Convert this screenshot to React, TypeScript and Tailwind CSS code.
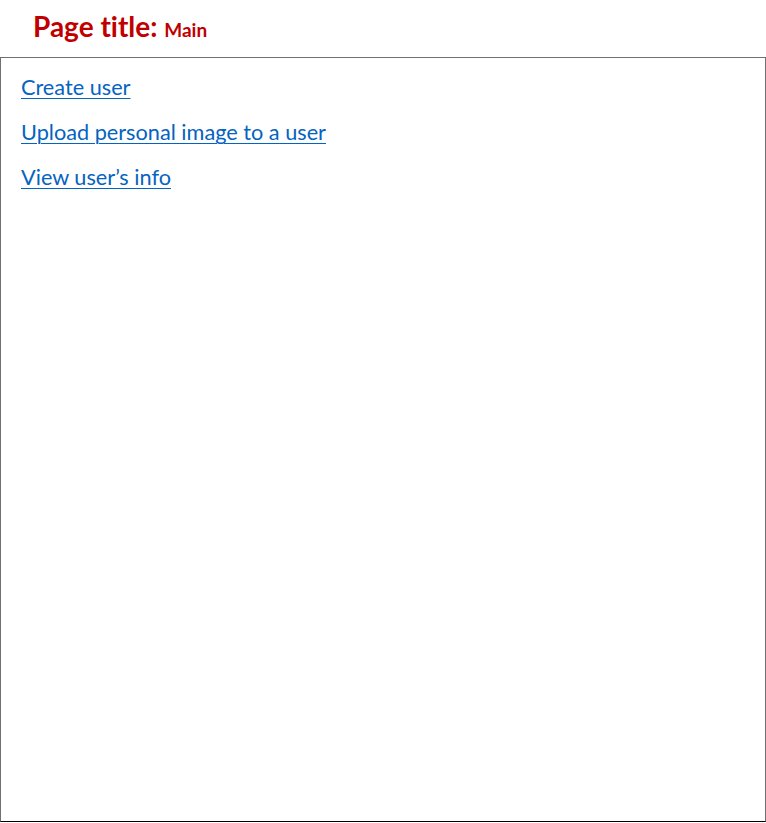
export default function App() {
  const links = ['Create user', 'Upload personal image to a user', 'View user\u2019s info'];
  return (
    <div className="w-[766px] h-[823px] bg-white font-['Lato','Open_Sans',sans-serif] [font-variant-ligatures:none]">
      <div className="h-[57px] pl-[33px] pt-[8px] text-[#c00000] font-bold">
        <span className="text-[28px] leading-[37px]">Page title: </span>
        <span className="text-[19px]">Main</span>
      </div>
      <div className="w-[766px] h-[765px] border border-[#707070] border-b-black flex flex-col gap-[16px] pl-[20px] pt-[15px]">
        {links.map((l) => (
          <a
            key={l}
            href="#"
            className="text-[#0563c1] underline decoration-1 text-[21.7px] leading-[29px] underline-offset-[3px] self-start"
          >
            {l}
          </a>
        ))}
      </div>
    </div>
  );
}
